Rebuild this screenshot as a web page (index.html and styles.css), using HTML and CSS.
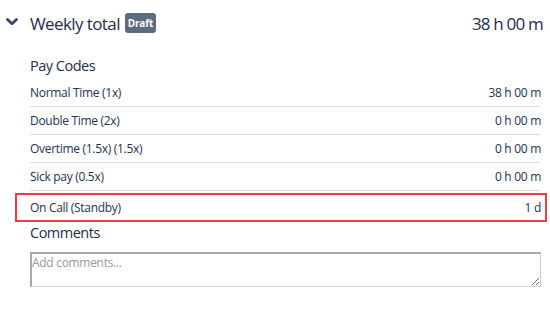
FILE: index.html
```html
<!DOCTYPE html>
<html lang="en">
<head>
    <meta charset="UTF-8">
    <title>Weekly total</title>
    <link rel="stylesheet" href="styles.css">
</head>
<body>
    <div class="card">
        <div class="card-header">
            <svg class="chevron" width="12" height="8" viewBox="0 0 12 8">
                <path d="M1.5 1.5 L6 5.8 L10.5 1.5" fill="none" stroke="#34486a" stroke-width="2.8" stroke-linecap="round" stroke-linejoin="round"/>
            </svg>
            <span class="title">Weekly total</span>
            <span class="badge">Draft</span>
            <span class="total">38 h 00 m</span>
        </div>
        <div class="card-body">
            <h3>Pay Codes</h3>
            <div class="row"><span>Normal Time (1x)</span><span>38 h 00 m</span></div>
            <div class="row"><span>Double Time (2x)</span><span>0 h 00 m</span></div>
            <div class="row"><span>Overtime (1.5x) (1.5x)</span><span>0 h 00 m</span></div>
            <div class="row"><span>Sick pay (0.5x)</span><span>0 h 00 m</span></div>
            <div class="row highlight"><span>On Call (Standby)</span><span>1 d</span></div>
            <h3 class="comments-title">Comments</h3>
            <textarea class="comments" placeholder="Add comments..."></textarea>
        </div>
    </div>
</body>
</html>
```

FILE: styles.css
```css
body {
    margin: 0;
    background: #ffffff;
    font-family: "Open Sans", "Noto Sans", sans-serif;
    color: #1f2d4b;
}
.card {
    padding: 0 9px 0 0;
}
.card-header {
    display: flex;
    align-items: center;
    height: 46px;
    padding: 0 0 0 6px;
}
.chevron {
    margin-right: 12px;
    margin-top: -2px;
}
.title {
    font-size: 17px;
    letter-spacing: -0.6px;
}
.badge {
    background: #5d6d80;
    color: #ffffff;
    font-size: 10px;
    line-height: 14px;
    font-weight: bold;
    letter-spacing: -0.2px;
    padding: 3px 3px;
    border-radius: 3px;
    margin-left: 5px;
}
.total {
    margin-left: auto;
    margin-right: -2px;
    font-size: 17px;
    letter-spacing: -0.8px;
}
.card-body {
    padding-left: 30px;
}
h3 {
    font-size: 14.5px;
    line-height: 20px;
    font-weight: normal;
    letter-spacing: -0.5px;
    margin: 10px 0 3px;
}
.row {
    display: flex;
    justify-content: space-between;
    align-items: center;
    box-sizing: border-box;
    height: 28px;
    font-size: 12px;
    letter-spacing: -0.3px;
    color: #23324f;
    border-bottom: 1px solid #dedede;
}
.row.highlight {
    border: 2px solid #f03c3c;
    margin: 2px -6px 0 -15px;
    padding: 0 4px 0 13px;
    height: 29px;
}
.comments-title {
    margin: 1px 0 9px;
}
.comments {
    display: block;
    box-sizing: border-box;
    width: 100%;
    height: 35px;
    border: 1px solid #cfcfcf;
    border-top: 2px solid #a8a8a8;
    border-left: 2px solid #a8a8a8;
    font-family: inherit;
    font-size: 12px;
    letter-spacing: -0.3px;
    padding: 0;
    resize: vertical;
}
.comments::placeholder {
    color: #9a9a9a;
}
```
